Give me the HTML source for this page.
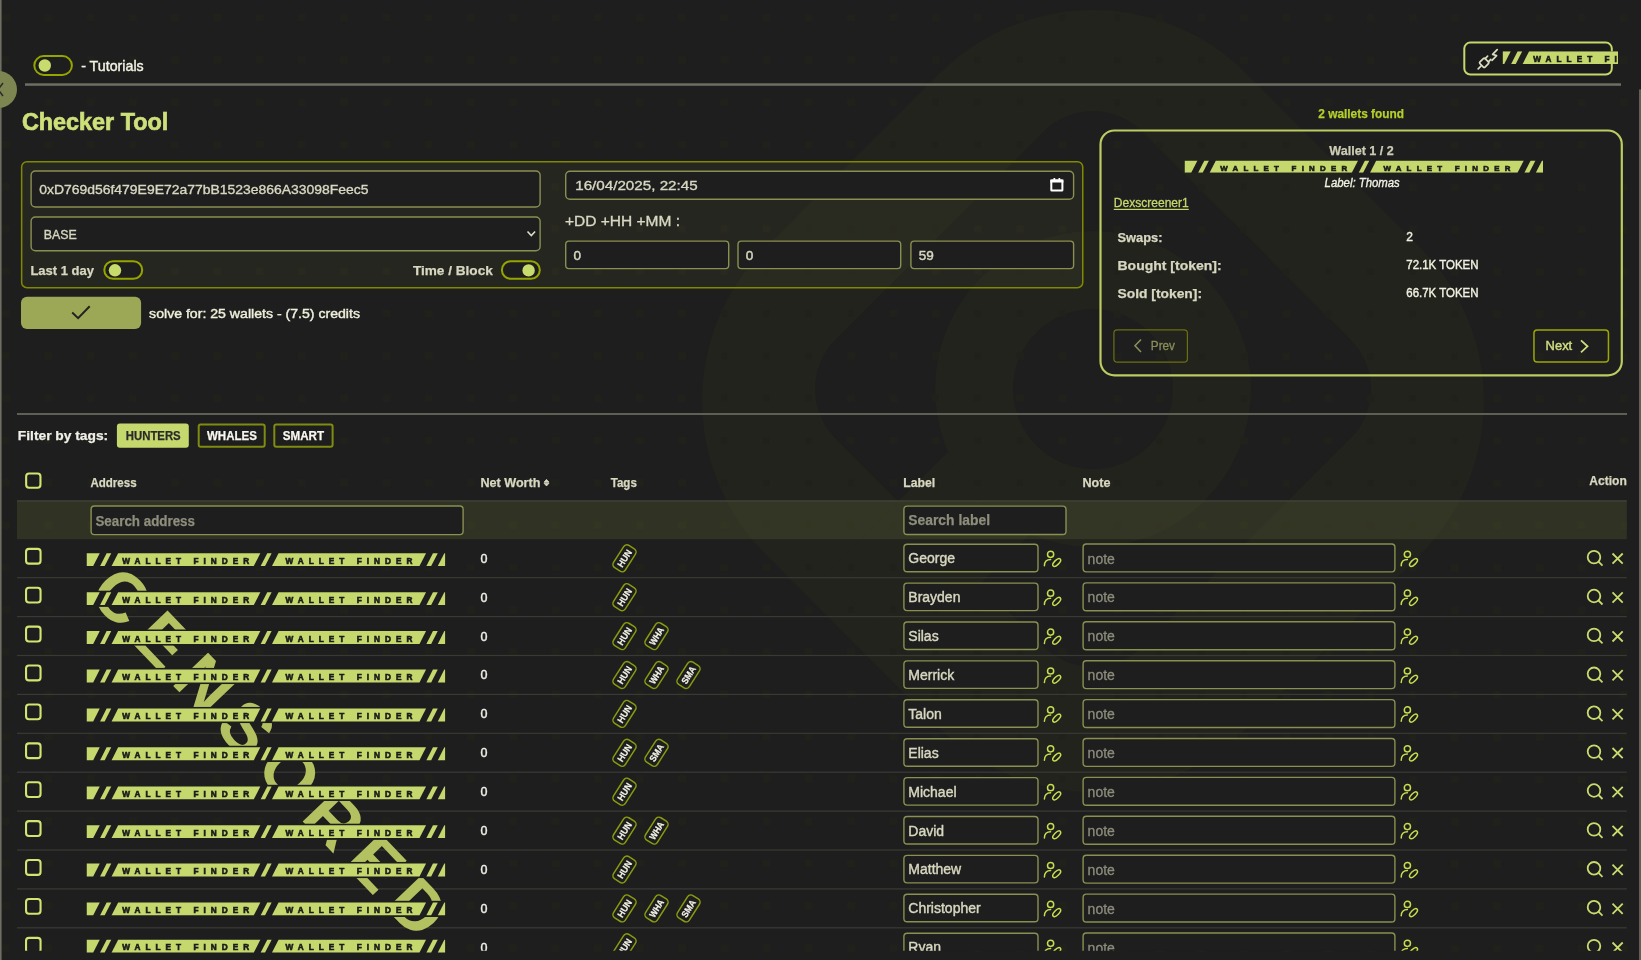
<!DOCTYPE html>
<html><head><meta charset="utf-8"><title>Checker Tool</title>
<style>html,body{margin:0;padding:0;width:1641px;height:960px;overflow:hidden;background:#1e1e1e;font-family:"Liberation Sans", sans-serif;}</style>
</head><body>
<svg width="1641" height="960" viewBox="0 0 1641 960" style="position:absolute;left:0;top:0;font-family:'Liberation Sans', sans-serif;will-change:transform">
<defs><pattern id="dots" x="2.5" y="14" width="42.25" height="42.3" patternUnits="userSpaceOnUse"><rect x="0" y="0" width="7" height="7" fill="#21211b"/></pattern><pattern id="dots2" x="1198.2" y="14.5" width="42.2" height="42.3" patternUnits="userSpaceOnUse"><rect x="0" y="0" width="7" height="7" fill="#21211b"/></pattern></defs>
<rect x="0" y="0" width="1641" height="960" fill="#1e1e1e"/>
<g>
<rect x="-340" y="-340" width="680" height="680" rx="217" fill="#22231d" transform="translate(1093,401) rotate(45)"/>
<rect x="-217" y="-217" width="434" height="434" rx="70" fill="#1e1e1e" transform="translate(1093,389) rotate(45)"/>
<rect x="0" y="-58" width="320" height="116" fill="#22231d" transform="translate(1093,389) rotate(135)"/>
<circle cx="1093" cy="389" r="158" fill="#22231d"/>
<circle cx="1093" cy="389" r="80" fill="#1e1e1e"/>
</g>
<rect x="0" y="0" width="1093" height="960" fill="url(#dots)"/>
<rect x="1093" y="0" width="548" height="960" fill="url(#dots2)"/>
<rect x="0.00" y="0.00" width="1.60" height="960.00" rx="0.00" fill="#6e6e62"/>
<rect x="1639.00" y="89.40" width="2.00" height="870.60" rx="0.00" fill="#5f5f55"/>
<circle cx="-1.5" cy="89.5" r="18.5" fill="#7d8650"/>
<polyline points="3,83 -2,89.5 3,96" fill="none" stroke="#2a2a2a" stroke-width="1.5"/>
<rect x="34.30" y="56.10" width="37.60" height="18.80" rx="9.40" fill="#1e1e1e" stroke="#96a400" stroke-width="2"/>
<circle cx="44.80" cy="65.50" r="6.2" fill="#c8dc6e"/>
<text x="81.20" y="70.70" font-size="14.5" fill="#f2f2e2" font-weight="normal" textLength="62.50" lengthAdjust="spacingAndGlyphs" stroke="#f2f2e2" stroke-width="0.4" text-anchor="start">- Tutorials</text>
<rect x="25.00" y="83.30" width="1596.00" height="2.50" rx="0.00" fill="#6e6e62"/>
<rect x="1464.30" y="42.60" width="147.50" height="31.90" rx="6.00" fill="#1b1b1b" stroke="#c5d86d" stroke-width="2"/>
<clipPath id="tc21"><rect x="1502.80" y="51.20" width="115.20" height="12.80"/></clipPath>
<g clip-path="url(#tc21)">
<rect x="1502.80" y="51.20" width="115.20" height="12.80" fill="#1e1e1e"/>
<polygon points="1477.80,64.00 1504.25,64.00 1510.75,51.20 1484.30,51.20" fill="#c5d86d"/>
<polygon points="1511.15,64.00 1515.75,64.00 1522.25,51.20 1517.65,51.20" fill="#c5d86d"/>
<polygon points="1522.65,64.00 1664.85,64.00 1671.35,51.20 1529.15,51.20" fill="#c5d86d"/>
<polygon points="1671.75,64.00 1676.15,64.00 1682.65,51.20 1678.25,51.20" fill="#c5d86d"/>
<polygon points="1683.05,64.00 1830.55,64.00 1837.05,51.20 1689.55,51.20" fill="#c5d86d"/>
<polygon points="1837.45,64.00 1842.25,64.00 1848.75,51.20 1843.95,51.20" fill="#c5d86d"/>
<polygon points="1848.85,64.00 1997.80,64.00 2004.30,51.20 1855.35,51.20" fill="#c5d86d"/>
<text x="1533.25" y="61.67" font-size="8.15" font-weight="bold" fill="#1a1a1a" stroke="#1a1a1a" stroke-width="0.6" textLength="127.00" lengthAdjust="spacing">WALLET FINDER</text>
<text x="1696.45" y="61.67" font-size="8.15" font-weight="bold" fill="#1a1a1a" stroke="#1a1a1a" stroke-width="0.6" textLength="127.00" lengthAdjust="spacing">WALLET FINDER</text>
</g>
<g fill="none" stroke="#dcdcc0" stroke-width="1.7" stroke-linecap="round" stroke-linejoin="round"><line x1="1478.2" y1="68.8" x2="1481" y2="66"/><g transform="translate(1484.2,62.8) rotate(-45)"><rect x="-3.6" y="-3.6" width="7.2" height="7.2" rx="1.2"/></g><line x1="1485.2" y1="58.6" x2="1487.6" y2="56.2"/><line x1="1488.4" y1="61.8" x2="1490.8" y2="59.4"/><polyline points="1497.2,49.6 1492.6,54.4 1496.6,55.6 1492,60.4"/></g>
<text x="21.90" y="129.60" font-size="24.5" fill="#cde07a" font-weight="bold" textLength="146.40" lengthAdjust="spacingAndGlyphs" stroke="#cde07a" stroke-width="0.7" text-anchor="start">Checker Tool</text>
<rect x="21.65" y="161.75" width="1061.10" height="125.90" rx="5.25" fill="rgba(80,80,50,0.18)" stroke="#7f8a00" stroke-width="1.5"/>
<rect x="31.10" y="171.00" width="509.00" height="36.00" rx="4.30" fill="#1e1e1e" stroke="#8a9050" stroke-width="1.4"/>
<text x="39.20" y="193.70" font-size="13" fill="#d8d8c2" font-weight="normal" textLength="329.40" lengthAdjust="spacingAndGlyphs" stroke="#d8d8c2" stroke-width="0.35" text-anchor="start">0xD769d56f479E9E72a77bB1523e866A33098Feec5</text>
<rect x="31.10" y="217.00" width="509.00" height="33.80" rx="4.30" fill="#1e1e1e" stroke="#8a9050" stroke-width="1.4"/>
<text x="43.80" y="239.00" font-size="13" fill="#d8d8c2" font-weight="normal" textLength="33.00" lengthAdjust="spacingAndGlyphs" stroke="#d8d8c2" stroke-width="0.35" text-anchor="start">BASE</text>
<polyline points="527.5,231.5 531.3,235.5 535.1,231.5" fill="none" stroke="#ddddc8" stroke-width="1.6"/>
<text x="30.40" y="274.70" font-size="13" fill="#d8d8c0" font-weight="bold" textLength="63.50" lengthAdjust="spacingAndGlyphs" stroke="#d8d8c0" stroke-width="0.25" text-anchor="start">Last 1 day</text>
<rect x="104.30" y="261.20" width="37.90" height="17.60" rx="8.80" fill="#1e1e1e" stroke="#96a400" stroke-width="2"/>
<circle cx="115.00" cy="270.30" r="6.2" fill="#c8dc6e"/>
<text x="412.90" y="275.10" font-size="13" fill="#d8d8c0" font-weight="bold" textLength="79.90" lengthAdjust="spacingAndGlyphs" stroke="#d8d8c0" stroke-width="0.25" text-anchor="start">Time / Block</text>
<rect x="501.90" y="261.20" width="37.90" height="17.60" rx="8.80" fill="#1e1e1e" stroke="#96a400" stroke-width="2"/>
<circle cx="528.60" cy="270.40" r="6.2" fill="#c8dc6e"/>
<rect x="565.70" y="171.20" width="507.90" height="28.10" rx="4.30" fill="#1e1e1e" stroke="#8a9050" stroke-width="1.4"/>
<text x="575.20" y="190.10" font-size="13.5" fill="#d8d8c2" font-weight="normal" textLength="122.50" lengthAdjust="spacingAndGlyphs" stroke="#d8d8c2" stroke-width="0.35" text-anchor="start">16/04/2025, 22:45</text>
<rect x="1051.30" y="180.50" width="11.10" height="9.90" rx="0.50" fill="none" stroke="#ffffff" stroke-width="2"/>
<rect x="1050.30" y="179.50" width="13.10" height="3.00" rx="0.00" fill="#ffffff"/>
<rect x="1053.50" y="178.00" width="1.70" height="2.50" rx="0.00" fill="#ffffff"/>
<rect x="1058.50" y="178.00" width="1.70" height="2.50" rx="0.00" fill="#ffffff"/>
<text x="564.90" y="226.10" font-size="15" fill="#d8d8c2" font-weight="normal" textLength="115.10" lengthAdjust="spacingAndGlyphs" stroke="#d8d8c2" stroke-width="0.35" text-anchor="start">+DD +HH +MM :</text>
<rect x="565.70" y="241.10" width="163.00" height="27.50" rx="3.30" fill="#1e1e1e" stroke="#8a9050" stroke-width="1.4"/>
<text x="573.50" y="260.40" font-size="13.5" fill="#d8d8c2" font-weight="normal" stroke="#d8d8c2" stroke-width="0.45" text-anchor="start">0</text>
<rect x="738.00" y="241.10" width="162.70" height="27.50" rx="3.30" fill="#1e1e1e" stroke="#8a9050" stroke-width="1.4"/>
<text x="745.80" y="260.40" font-size="13.5" fill="#d8d8c2" font-weight="normal" stroke="#d8d8c2" stroke-width="0.45" text-anchor="start">0</text>
<rect x="910.90" y="241.10" width="162.70" height="27.50" rx="3.30" fill="#1e1e1e" stroke="#8a9050" stroke-width="1.4"/>
<text x="918.70" y="260.40" font-size="13.5" fill="#d8d8c2" font-weight="normal" stroke="#d8d8c2" stroke-width="0.45" text-anchor="start">59</text>
<rect x="21.00" y="296.80" width="120.10" height="32.30" rx="6.00" fill="#9ca856"/>
<polyline points="72.2,312.6 78.1,318.2 89.7,306.2" fill="none" stroke="#222222" stroke-width="2"/>
<text x="149.10" y="317.70" font-size="13" fill="#f0f0dc" font-weight="normal" textLength="210.90" lengthAdjust="spacingAndGlyphs" stroke="#f0f0dc" stroke-width="0.4" text-anchor="start">solve for: 25 wallets - (7.5) credits</text>
<text x="1318.30" y="117.80" font-size="13" fill="#b5cf2a" font-weight="bold" textLength="85.70" lengthAdjust="spacingAndGlyphs" stroke="#b5cf2a" stroke-width="0.25" text-anchor="start">2 wallets found</text>
<rect x="1100.50" y="130.50" width="521.30" height="244.80" rx="13.90" fill="none" stroke="#bccb62" stroke-width="2.2"/>
<text x="1329.30" y="155.40" font-size="13" fill="#cdcdb5" font-weight="bold" textLength="64.50" lengthAdjust="spacingAndGlyphs" stroke="#cdcdb5" stroke-width="0.25" text-anchor="start">Wallet 1 / 2</text>
<clipPath id="tc67"><rect x="1184.75" y="160.40" width="358.25" height="12.40"/></clipPath>
<g clip-path="url(#tc67)">
<rect x="1184.75" y="160.40" width="358.25" height="12.40" fill="#1e1e1e"/>
<polygon points="1164.75,172.80 1191.20,172.80 1197.49,160.40 1171.04,160.40" fill="#c5d86d"/>
<polygon points="1198.10,172.80 1202.70,172.80 1208.99,160.40 1204.39,160.40" fill="#c5d86d"/>
<polygon points="1209.60,172.80 1351.80,172.80 1358.09,160.40 1215.89,160.40" fill="#c5d86d"/>
<polygon points="1358.70,172.80 1363.10,172.80 1369.39,160.40 1364.99,160.40" fill="#c5d86d"/>
<polygon points="1370.00,172.80 1517.50,172.80 1523.79,160.40 1376.29,160.40" fill="#c5d86d"/>
<polygon points="1524.40,172.80 1529.20,172.80 1535.49,160.40 1530.69,160.40" fill="#c5d86d"/>
<polygon points="1535.80,172.80 1684.75,172.80 1691.04,160.40 1542.09,160.40" fill="#c5d86d"/>
<text x="1220.20" y="170.55" font-size="7.89" font-weight="bold" fill="#1a1a1a" stroke="#1a1a1a" stroke-width="0.6" textLength="127.00" lengthAdjust="spacing">WALLET FINDER</text>
<text x="1383.40" y="170.55" font-size="7.89" font-weight="bold" fill="#1a1a1a" stroke="#1a1a1a" stroke-width="0.6" textLength="127.00" lengthAdjust="spacing">WALLET FINDER</text>
</g>
<text x="1324.60" y="187.00" font-size="12.5" fill="#f2f2e4" font-weight="normal" font-style="italic" textLength="75.20" lengthAdjust="spacingAndGlyphs" stroke="#f2f2e4" stroke-width="0.35" text-anchor="start">Label: Thomas</text>
<text x="1113.75" y="206.90" font-size="12.5" fill="#c5d86d" font-weight="normal" textLength="75.00" lengthAdjust="spacingAndGlyphs" stroke="#c5d86d" stroke-width="0.3" text-anchor="start">Dexscreener1</text>
<rect x="1113.75" y="208.80" width="75.00" height="1.20" rx="0.00" fill="#c5d86d"/>
<text x="1117.50" y="241.70" font-size="13" fill="#d8d8c0" font-weight="bold" textLength="45.00" lengthAdjust="spacingAndGlyphs" stroke="#d8d8c0" stroke-width="0.25" text-anchor="start">Swaps:</text>
<text x="1406.30" y="241.20" font-size="12" fill="#f0f0e0" font-weight="normal" stroke="#f0f0e0" stroke-width="0.4" text-anchor="start">2</text>
<text x="1117.50" y="269.70" font-size="13" fill="#d8d8c0" font-weight="bold" textLength="104.20" lengthAdjust="spacingAndGlyphs" stroke="#d8d8c0" stroke-width="0.25" text-anchor="start">Bought [token]:</text>
<text x="1406.30" y="269.20" font-size="12" fill="#f0f0e0" font-weight="normal" textLength="72.20" lengthAdjust="spacingAndGlyphs" stroke="#f0f0e0" stroke-width="0.4" text-anchor="start">72.1K TOKEN</text>
<text x="1117.50" y="297.70" font-size="13" fill="#d8d8c0" font-weight="bold" textLength="84.50" lengthAdjust="spacingAndGlyphs" stroke="#d8d8c0" stroke-width="0.25" text-anchor="start">Sold [token]:</text>
<text x="1406.30" y="297.20" font-size="12" fill="#f0f0e0" font-weight="normal" textLength="72.20" lengthAdjust="spacingAndGlyphs" stroke="#f0f0e0" stroke-width="0.4" text-anchor="start">66.7K TOKEN</text>
<rect x="1113.90" y="329.80" width="73.50" height="32.40" rx="3.40" fill="none" stroke="#6b7010" stroke-width="1.2"/>
<polyline points="1141,339.5 1135,345.8 1141,352" fill="none" stroke="#8a8e5a" stroke-width="1.6"/>
<text x="1150.80" y="349.70" font-size="13" fill="#8a8e5a" font-weight="normal" textLength="24.20" lengthAdjust="spacingAndGlyphs" stroke="#8a8e5a" stroke-width="0.3" text-anchor="start">Prev</text>
<rect x="1533.95" y="329.95" width="74.50" height="32.00" rx="3.25" fill="none" stroke="#9aa800" stroke-width="1.5"/>
<text x="1545.60" y="349.80" font-size="13" fill="#d0dc80" font-weight="normal" textLength="26.60" lengthAdjust="spacingAndGlyphs" stroke="#d0dc80" stroke-width="0.45" text-anchor="start">Next</text>
<polyline points="1581,340.3 1587.5,346.3 1581,352.4" fill="none" stroke="#d0dc80" stroke-width="1.8"/>
<rect x="17.00" y="413.00" width="1610.00" height="2.00" rx="0.00" fill="#5f5f55"/>
<text x="17.80" y="440.40" font-size="13" fill="#f0f0e8" font-weight="bold" textLength="90.40" lengthAdjust="spacingAndGlyphs" stroke="#f0f0e8" stroke-width="0.25" text-anchor="start">Filter by tags:</text>
<rect x="116.90" y="423.40" width="71.90" height="24.30" rx="3.00" fill="#c5d86d"/>
<text x="125.80" y="440.20" font-size="12" fill="#2a2a2a" font-weight="bold" textLength="54.90" lengthAdjust="spacingAndGlyphs" stroke="#2a2a2a" stroke-width="0.25" text-anchor="start">HUNTERS</text>
<rect x="198.70" y="424.40" width="66.00" height="22.30" rx="2.00" fill="#1e1e1e" stroke="#7f8c0f" stroke-width="2"/>
<text x="207.00" y="440.20" font-size="12" fill="#f8f8f0" font-weight="bold" textLength="49.80" lengthAdjust="spacingAndGlyphs" stroke="#f8f8f0" stroke-width="0.25" text-anchor="start">WHALES</text>
<rect x="274.30" y="424.40" width="58.30" height="22.30" rx="2.00" fill="#1e1e1e" stroke="#7f8c0f" stroke-width="2"/>
<text x="282.70" y="440.20" font-size="12" fill="#f8f8f0" font-weight="bold" textLength="41.40" lengthAdjust="spacingAndGlyphs" stroke="#f8f8f0" stroke-width="0.25" text-anchor="start">SMART</text>
<rect x="26.15" y="473.55" width="14.30" height="14.20" rx="2.95" fill="none" stroke="#d2e570" stroke-width="2.1"/>
<text x="90.40" y="486.60" font-size="12" fill="#d8d8c0" font-weight="bold" textLength="46.20" lengthAdjust="spacingAndGlyphs" stroke="#d8d8c0" stroke-width="0.25" text-anchor="start">Address</text>
<text x="480.40" y="486.60" font-size="12" fill="#d8d8c0" font-weight="bold" textLength="60.00" lengthAdjust="spacingAndGlyphs" stroke="#d8d8c0" stroke-width="0.25" text-anchor="start">Net Worth</text>
<text x="610.80" y="486.60" font-size="12" fill="#d8d8c0" font-weight="bold" textLength="26.00" lengthAdjust="spacingAndGlyphs" stroke="#d8d8c0" stroke-width="0.25" text-anchor="start">Tags</text>
<text x="903.20" y="486.60" font-size="12" fill="#d8d8c0" font-weight="bold" textLength="32.00" lengthAdjust="spacingAndGlyphs" stroke="#d8d8c0" stroke-width="0.25" text-anchor="start">Label</text>
<text x="1082.40" y="486.60" font-size="12" fill="#d8d8c0" font-weight="bold" textLength="28.00" lengthAdjust="spacingAndGlyphs" stroke="#d8d8c0" stroke-width="0.25" text-anchor="start">Note</text>
<path d="M544,482.2 L546.5,479.4 L549,482.2 Z M544,483.2 L546.5,486 L549,483.2 Z" fill="#d8d8c0" stroke="#d8d8c0" stroke-width="0.8" stroke-linejoin="round"/>
<text x="1589.30" y="484.80" font-size="12" fill="#d8d8c0" font-weight="bold" textLength="37.50" lengthAdjust="spacingAndGlyphs" stroke="#d8d8c0" stroke-width="0.25" text-anchor="start">Action</text>
<rect x="17.00" y="500.40" width="1609.80" height="38.80" rx="0.00" fill="rgba(110,115,60,0.24)"/>
<rect x="17.00" y="500.40" width="1609.80" height="1.20" rx="0.00" fill="#45453a"/>
<rect x="91.10" y="506.00" width="372.00" height="28.60" rx="3.30" fill="#1e1e1e" stroke="#8a9050" stroke-width="1.4"/>
<text x="95.40" y="525.50" font-size="14" fill="#8e8e7c" font-weight="bold" textLength="99.60" lengthAdjust="spacingAndGlyphs" stroke="#8e8e7c" stroke-width="0.25" text-anchor="start">Search address</text>
<rect x="903.90" y="506.10" width="162.10" height="28.40" rx="3.30" fill="#1e1e1e" stroke="#8a9050" stroke-width="1.4"/>
<text x="908.30" y="524.90" font-size="14" fill="#8e8e7c" font-weight="bold" textLength="81.70" lengthAdjust="spacingAndGlyphs" stroke="#8e8e7c" stroke-width="0.25" text-anchor="start">Search label</text>
<clipPath id="tbl"><rect x="0" y="538" width="1641" height="412.8"/></clipPath>
<g clip-path="url(#tbl)">
<rect x="17.00" y="577.10" width="1609.80" height="1.20" rx="0.00" fill="#3a3a35"/>
<rect x="17.00" y="616.00" width="1609.80" height="1.20" rx="0.00" fill="#3a3a35"/>
<rect x="17.00" y="654.90" width="1609.80" height="1.20" rx="0.00" fill="#3a3a35"/>
<rect x="17.00" y="693.80" width="1609.80" height="1.20" rx="0.00" fill="#3a3a35"/>
<rect x="17.00" y="732.70" width="1609.80" height="1.20" rx="0.00" fill="#3a3a35"/>
<rect x="17.00" y="771.60" width="1609.80" height="1.20" rx="0.00" fill="#3a3a35"/>
<rect x="17.00" y="810.50" width="1609.80" height="1.20" rx="0.00" fill="#3a3a35"/>
<rect x="17.00" y="849.40" width="1609.80" height="1.20" rx="0.00" fill="#3a3a35"/>
<rect x="17.00" y="888.30" width="1609.80" height="1.20" rx="0.00" fill="#3a3a35"/>
<rect x="17.00" y="927.20" width="1609.80" height="1.20" rx="0.00" fill="#3a3a35"/>
<rect x="17.00" y="966.10" width="1609.80" height="1.20" rx="0.00" fill="#3a3a35"/>
<g opacity="1"><text x="0" y="0" font-size="70" font-weight="bold" fill="#b4c160" transform="translate(269.5,752) rotate(46.3)" text-anchor="middle" dominant-baseline="central" textLength="480" lengthAdjust="spacing">CENSORED</text></g>
<rect x="26.05" y="548.85" width="14.50" height="14.80" rx="2.95" fill="none" stroke="#d2e570" stroke-width="2.1"/>
<clipPath id="tc132"><rect x="86.75" y="551.40" width="358.35" height="16.50"/></clipPath>
<g clip-path="url(#tc132)">
<rect x="86.75" y="551.40" width="358.35" height="16.50" fill="#1e1e1e"/>
<polygon points="66.75,566.10 93.20,566.10 99.75,553.20 73.30,553.20" fill="#c5d86d"/>
<polygon points="100.10,566.10 104.70,566.10 111.25,553.20 106.65,553.20" fill="#c5d86d"/>
<polygon points="111.60,566.10 253.80,566.10 260.35,553.20 118.15,553.20" fill="#c5d86d"/>
<polygon points="260.70,566.10 265.10,566.10 271.65,553.20 267.25,553.20" fill="#c5d86d"/>
<polygon points="272.00,566.10 419.50,566.10 426.05,553.20 278.55,553.20" fill="#c5d86d"/>
<polygon points="426.40,566.10 431.20,566.10 437.75,553.20 432.95,553.20" fill="#c5d86d"/>
<polygon points="437.80,566.10 586.75,566.10 593.30,553.20 444.35,553.20" fill="#c5d86d"/>
<text x="122.20" y="563.75" font-size="8.21" font-weight="bold" fill="#1a1a1a" stroke="#1a1a1a" stroke-width="0.6" textLength="127.00" lengthAdjust="spacing">WALLET FINDER</text>
<text x="285.40" y="563.75" font-size="8.21" font-weight="bold" fill="#1a1a1a" stroke="#1a1a1a" stroke-width="0.6" textLength="127.00" lengthAdjust="spacing">WALLET FINDER</text>
</g>
<text x="480.40" y="562.70" font-size="12.5" fill="#f0f0e8" font-weight="normal" stroke="#f0f0e8" stroke-width="0.4" text-anchor="start">0</text>
<g transform="translate(624.50,558.30) rotate(-57.5)"><rect x="-13.2" y="-7" width="26.4" height="14" rx="3.8" fill="#1e1e1e" stroke="#8a9a10" stroke-width="1.5"/><text x="0" y="3.3" font-size="9.2" font-weight="bold" fill="#f4f4e8" stroke="#f4f4e8" stroke-width="0.2" text-anchor="middle" textLength="19" lengthAdjust="spacingAndGlyphs">HUN</text></g>
<rect x="903.90" y="544.20" width="134.10" height="27.50" rx="3.30" fill="#1e1e1e" stroke="#8a9050" stroke-width="1.4"/>
<text x="908.30" y="563.25" font-size="14" fill="#d8d8c0" font-weight="normal" stroke="#d8d8c0" stroke-width="0.4" text-anchor="start">George</text>
<g transform="translate(1043.80,549.90)" fill="none" stroke="#c8dc50" stroke-width="1.5" stroke-linecap="round"><circle cx="6.8" cy="4.4" r="3.1"/><path d="M0.6,15.8 C0.6,11.8 2.8,9.5 6.8,9.5"/><ellipse cx="12.9" cy="12.6" rx="5.0" ry="2.3" transform="rotate(-45 12.9 12.6)"/></g>
<g transform="translate(1400.60,549.90)" fill="none" stroke="#c8dc50" stroke-width="1.5" stroke-linecap="round"><circle cx="6.8" cy="4.4" r="3.1"/><path d="M0.6,15.8 C0.6,11.8 2.8,9.5 6.8,9.5"/><ellipse cx="12.9" cy="12.6" rx="5.0" ry="2.3" transform="rotate(-45 12.9 12.6)"/></g>
<rect x="1083.10" y="544.00" width="311.80" height="27.90" rx="3.30" fill="#1e1e1e" stroke="#8a9050" stroke-width="1.4"/>
<text x="1087.60" y="563.50" font-size="14" fill="#8c8c7c" font-weight="normal" stroke="#8c8c7c" stroke-width="0.3" text-anchor="start">note</text>
<g fill="none" stroke="#c8dc6e" stroke-width="1.8"><circle cx="1594" cy="557.10" r="6.3"/><line x1="1598.5" y1="561.60" x2="1602.5" y2="565.60"/><path d="M1612.5,553.50 L1622.7,563.70 M1622.7,553.50 L1612.5,563.70"/></g>
<rect x="26.05" y="587.75" width="14.50" height="14.80" rx="2.95" fill="none" stroke="#d2e570" stroke-width="2.1"/>
<clipPath id="tc155"><rect x="86.75" y="590.40" width="358.35" height="16.50"/></clipPath>
<g clip-path="url(#tc155)">
<rect x="86.75" y="590.40" width="358.35" height="16.50" fill="#1e1e1e"/>
<polygon points="66.75,605.10 93.20,605.10 99.75,592.20 73.30,592.20" fill="#c5d86d"/>
<polygon points="100.10,605.10 104.70,605.10 111.25,592.20 106.65,592.20" fill="#c5d86d"/>
<polygon points="111.60,605.10 253.80,605.10 260.35,592.20 118.15,592.20" fill="#c5d86d"/>
<polygon points="260.70,605.10 265.10,605.10 271.65,592.20 267.25,592.20" fill="#c5d86d"/>
<polygon points="272.00,605.10 419.50,605.10 426.05,592.20 278.55,592.20" fill="#c5d86d"/>
<polygon points="426.40,605.10 431.20,605.10 437.75,592.20 432.95,592.20" fill="#c5d86d"/>
<polygon points="437.80,605.10 586.75,605.10 593.30,592.20 444.35,592.20" fill="#c5d86d"/>
<text x="122.20" y="602.75" font-size="8.21" font-weight="bold" fill="#1a1a1a" stroke="#1a1a1a" stroke-width="0.6" textLength="127.00" lengthAdjust="spacing">WALLET FINDER</text>
<text x="285.40" y="602.75" font-size="8.21" font-weight="bold" fill="#1a1a1a" stroke="#1a1a1a" stroke-width="0.6" textLength="127.00" lengthAdjust="spacing">WALLET FINDER</text>
</g>
<text x="480.40" y="601.60" font-size="12.5" fill="#f0f0e8" font-weight="normal" stroke="#f0f0e8" stroke-width="0.4" text-anchor="start">0</text>
<g transform="translate(624.50,597.20) rotate(-57.5)"><rect x="-13.2" y="-7" width="26.4" height="14" rx="3.8" fill="#1e1e1e" stroke="#8a9a10" stroke-width="1.5"/><text x="0" y="3.3" font-size="9.2" font-weight="bold" fill="#f4f4e8" stroke="#f4f4e8" stroke-width="0.2" text-anchor="middle" textLength="19" lengthAdjust="spacingAndGlyphs">HUN</text></g>
<rect x="903.90" y="583.10" width="134.10" height="27.50" rx="3.30" fill="#1e1e1e" stroke="#8a9050" stroke-width="1.4"/>
<text x="908.30" y="602.15" font-size="14" fill="#d8d8c0" font-weight="normal" stroke="#d8d8c0" stroke-width="0.4" text-anchor="start">Brayden</text>
<g transform="translate(1043.80,588.80)" fill="none" stroke="#c8dc50" stroke-width="1.5" stroke-linecap="round"><circle cx="6.8" cy="4.4" r="3.1"/><path d="M0.6,15.8 C0.6,11.8 2.8,9.5 6.8,9.5"/><ellipse cx="12.9" cy="12.6" rx="5.0" ry="2.3" transform="rotate(-45 12.9 12.6)"/></g>
<g transform="translate(1400.60,588.80)" fill="none" stroke="#c8dc50" stroke-width="1.5" stroke-linecap="round"><circle cx="6.8" cy="4.4" r="3.1"/><path d="M0.6,15.8 C0.6,11.8 2.8,9.5 6.8,9.5"/><ellipse cx="12.9" cy="12.6" rx="5.0" ry="2.3" transform="rotate(-45 12.9 12.6)"/></g>
<rect x="1083.10" y="582.90" width="311.80" height="27.90" rx="3.30" fill="#1e1e1e" stroke="#8a9050" stroke-width="1.4"/>
<text x="1087.60" y="602.40" font-size="14" fill="#8c8c7c" font-weight="normal" stroke="#8c8c7c" stroke-width="0.3" text-anchor="start">note</text>
<g fill="none" stroke="#c8dc6e" stroke-width="1.8"><circle cx="1594" cy="596.00" r="6.3"/><line x1="1598.5" y1="600.50" x2="1602.5" y2="604.50"/><path d="M1612.5,592.40 L1622.7,602.60 M1622.7,592.40 L1612.5,602.60"/></g>
<rect x="26.05" y="626.65" width="14.50" height="14.80" rx="2.95" fill="none" stroke="#d2e570" stroke-width="2.1"/>
<clipPath id="tc178"><rect x="86.75" y="629.30" width="358.35" height="16.50"/></clipPath>
<g clip-path="url(#tc178)">
<rect x="86.75" y="629.30" width="358.35" height="16.50" fill="#1e1e1e"/>
<polygon points="66.75,644.00 93.20,644.00 99.75,631.10 73.30,631.10" fill="#c5d86d"/>
<polygon points="100.10,644.00 104.70,644.00 111.25,631.10 106.65,631.10" fill="#c5d86d"/>
<polygon points="111.60,644.00 253.80,644.00 260.35,631.10 118.15,631.10" fill="#c5d86d"/>
<polygon points="260.70,644.00 265.10,644.00 271.65,631.10 267.25,631.10" fill="#c5d86d"/>
<polygon points="272.00,644.00 419.50,644.00 426.05,631.10 278.55,631.10" fill="#c5d86d"/>
<polygon points="426.40,644.00 431.20,644.00 437.75,631.10 432.95,631.10" fill="#c5d86d"/>
<polygon points="437.80,644.00 586.75,644.00 593.30,631.10 444.35,631.10" fill="#c5d86d"/>
<text x="122.20" y="641.65" font-size="8.21" font-weight="bold" fill="#1a1a1a" stroke="#1a1a1a" stroke-width="0.6" textLength="127.00" lengthAdjust="spacing">WALLET FINDER</text>
<text x="285.40" y="641.65" font-size="8.21" font-weight="bold" fill="#1a1a1a" stroke="#1a1a1a" stroke-width="0.6" textLength="127.00" lengthAdjust="spacing">WALLET FINDER</text>
</g>
<text x="480.40" y="640.50" font-size="12.5" fill="#f0f0e8" font-weight="normal" stroke="#f0f0e8" stroke-width="0.4" text-anchor="start">0</text>
<g transform="translate(624.50,636.10) rotate(-57.5)"><rect x="-13.2" y="-7" width="26.4" height="14" rx="3.8" fill="#1e1e1e" stroke="#8a9a10" stroke-width="1.5"/><text x="0" y="3.3" font-size="9.2" font-weight="bold" fill="#f4f4e8" stroke="#f4f4e8" stroke-width="0.2" text-anchor="middle" textLength="19" lengthAdjust="spacingAndGlyphs">HUN</text></g>
<g transform="translate(656.50,636.10) rotate(-57.5)"><rect x="-13.2" y="-7" width="26.4" height="14" rx="3.8" fill="#1e1e1e" stroke="#8a9a10" stroke-width="1.5"/><text x="0" y="3.3" font-size="9.2" font-weight="bold" fill="#f4f4e8" stroke="#f4f4e8" stroke-width="0.2" text-anchor="middle" textLength="19" lengthAdjust="spacingAndGlyphs">WHA</text></g>
<rect x="903.90" y="622.00" width="134.10" height="27.50" rx="3.30" fill="#1e1e1e" stroke="#8a9050" stroke-width="1.4"/>
<text x="908.30" y="641.05" font-size="14" fill="#d8d8c0" font-weight="normal" stroke="#d8d8c0" stroke-width="0.4" text-anchor="start">Silas</text>
<g transform="translate(1043.80,627.70)" fill="none" stroke="#c8dc50" stroke-width="1.5" stroke-linecap="round"><circle cx="6.8" cy="4.4" r="3.1"/><path d="M0.6,15.8 C0.6,11.8 2.8,9.5 6.8,9.5"/><ellipse cx="12.9" cy="12.6" rx="5.0" ry="2.3" transform="rotate(-45 12.9 12.6)"/></g>
<g transform="translate(1400.60,627.70)" fill="none" stroke="#c8dc50" stroke-width="1.5" stroke-linecap="round"><circle cx="6.8" cy="4.4" r="3.1"/><path d="M0.6,15.8 C0.6,11.8 2.8,9.5 6.8,9.5"/><ellipse cx="12.9" cy="12.6" rx="5.0" ry="2.3" transform="rotate(-45 12.9 12.6)"/></g>
<rect x="1083.10" y="621.80" width="311.80" height="27.90" rx="3.30" fill="#1e1e1e" stroke="#8a9050" stroke-width="1.4"/>
<text x="1087.60" y="641.30" font-size="14" fill="#8c8c7c" font-weight="normal" stroke="#8c8c7c" stroke-width="0.3" text-anchor="start">note</text>
<g fill="none" stroke="#c8dc6e" stroke-width="1.8"><circle cx="1594" cy="634.90" r="6.3"/><line x1="1598.5" y1="639.40" x2="1602.5" y2="643.40"/><path d="M1612.5,631.30 L1622.7,641.50 M1622.7,631.30 L1612.5,641.50"/></g>
<rect x="26.05" y="665.55" width="14.50" height="14.80" rx="2.95" fill="none" stroke="#d2e570" stroke-width="2.1"/>
<clipPath id="tc202"><rect x="86.75" y="667.70" width="358.35" height="16.50"/></clipPath>
<g clip-path="url(#tc202)">
<rect x="86.75" y="667.70" width="358.35" height="16.50" fill="#1e1e1e"/>
<polygon points="66.75,682.40 93.20,682.40 99.75,669.50 73.30,669.50" fill="#c5d86d"/>
<polygon points="100.10,682.40 104.70,682.40 111.25,669.50 106.65,669.50" fill="#c5d86d"/>
<polygon points="111.60,682.40 253.80,682.40 260.35,669.50 118.15,669.50" fill="#c5d86d"/>
<polygon points="260.70,682.40 265.10,682.40 271.65,669.50 267.25,669.50" fill="#c5d86d"/>
<polygon points="272.00,682.40 419.50,682.40 426.05,669.50 278.55,669.50" fill="#c5d86d"/>
<polygon points="426.40,682.40 431.20,682.40 437.75,669.50 432.95,669.50" fill="#c5d86d"/>
<polygon points="437.80,682.40 586.75,682.40 593.30,669.50 444.35,669.50" fill="#c5d86d"/>
<text x="122.20" y="680.05" font-size="8.21" font-weight="bold" fill="#1a1a1a" stroke="#1a1a1a" stroke-width="0.6" textLength="127.00" lengthAdjust="spacing">WALLET FINDER</text>
<text x="285.40" y="680.05" font-size="8.21" font-weight="bold" fill="#1a1a1a" stroke="#1a1a1a" stroke-width="0.6" textLength="127.00" lengthAdjust="spacing">WALLET FINDER</text>
</g>
<text x="480.40" y="679.40" font-size="12.5" fill="#f0f0e8" font-weight="normal" stroke="#f0f0e8" stroke-width="0.4" text-anchor="start">0</text>
<g transform="translate(624.50,675.00) rotate(-57.5)"><rect x="-13.2" y="-7" width="26.4" height="14" rx="3.8" fill="#1e1e1e" stroke="#8a9a10" stroke-width="1.5"/><text x="0" y="3.3" font-size="9.2" font-weight="bold" fill="#f4f4e8" stroke="#f4f4e8" stroke-width="0.2" text-anchor="middle" textLength="19" lengthAdjust="spacingAndGlyphs">HUN</text></g>
<g transform="translate(656.50,675.00) rotate(-57.5)"><rect x="-13.2" y="-7" width="26.4" height="14" rx="3.8" fill="#1e1e1e" stroke="#8a9a10" stroke-width="1.5"/><text x="0" y="3.3" font-size="9.2" font-weight="bold" fill="#f4f4e8" stroke="#f4f4e8" stroke-width="0.2" text-anchor="middle" textLength="19" lengthAdjust="spacingAndGlyphs">WHA</text></g>
<g transform="translate(688.50,675.00) rotate(-57.5)"><rect x="-13.2" y="-7" width="26.4" height="14" rx="3.8" fill="#1e1e1e" stroke="#8a9a10" stroke-width="1.5"/><text x="0" y="3.3" font-size="9.2" font-weight="bold" fill="#f4f4e8" stroke="#f4f4e8" stroke-width="0.2" text-anchor="middle" textLength="19" lengthAdjust="spacingAndGlyphs">SMA</text></g>
<rect x="903.90" y="660.90" width="134.10" height="27.50" rx="3.30" fill="#1e1e1e" stroke="#8a9050" stroke-width="1.4"/>
<text x="908.30" y="679.95" font-size="14" fill="#d8d8c0" font-weight="normal" stroke="#d8d8c0" stroke-width="0.4" text-anchor="start">Merrick</text>
<g transform="translate(1043.80,666.60)" fill="none" stroke="#c8dc50" stroke-width="1.5" stroke-linecap="round"><circle cx="6.8" cy="4.4" r="3.1"/><path d="M0.6,15.8 C0.6,11.8 2.8,9.5 6.8,9.5"/><ellipse cx="12.9" cy="12.6" rx="5.0" ry="2.3" transform="rotate(-45 12.9 12.6)"/></g>
<g transform="translate(1400.60,666.60)" fill="none" stroke="#c8dc50" stroke-width="1.5" stroke-linecap="round"><circle cx="6.8" cy="4.4" r="3.1"/><path d="M0.6,15.8 C0.6,11.8 2.8,9.5 6.8,9.5"/><ellipse cx="12.9" cy="12.6" rx="5.0" ry="2.3" transform="rotate(-45 12.9 12.6)"/></g>
<rect x="1083.10" y="660.70" width="311.80" height="27.90" rx="3.30" fill="#1e1e1e" stroke="#8a9050" stroke-width="1.4"/>
<text x="1087.60" y="680.20" font-size="14" fill="#8c8c7c" font-weight="normal" stroke="#8c8c7c" stroke-width="0.3" text-anchor="start">note</text>
<g fill="none" stroke="#c8dc6e" stroke-width="1.8"><circle cx="1594" cy="673.80" r="6.3"/><line x1="1598.5" y1="678.30" x2="1602.5" y2="682.30"/><path d="M1612.5,670.20 L1622.7,680.40 M1622.7,670.20 L1612.5,680.40"/></g>
<rect x="26.05" y="704.45" width="14.50" height="14.80" rx="2.95" fill="none" stroke="#d2e570" stroke-width="2.1"/>
<clipPath id="tc227"><rect x="86.75" y="706.80" width="358.35" height="16.50"/></clipPath>
<g clip-path="url(#tc227)">
<rect x="86.75" y="706.80" width="358.35" height="16.50" fill="#1e1e1e"/>
<polygon points="66.75,721.50 93.20,721.50 99.75,708.60 73.30,708.60" fill="#c5d86d"/>
<polygon points="100.10,721.50 104.70,721.50 111.25,708.60 106.65,708.60" fill="#c5d86d"/>
<polygon points="111.60,721.50 253.80,721.50 260.35,708.60 118.15,708.60" fill="#c5d86d"/>
<polygon points="260.70,721.50 265.10,721.50 271.65,708.60 267.25,708.60" fill="#c5d86d"/>
<polygon points="272.00,721.50 419.50,721.50 426.05,708.60 278.55,708.60" fill="#c5d86d"/>
<polygon points="426.40,721.50 431.20,721.50 437.75,708.60 432.95,708.60" fill="#c5d86d"/>
<polygon points="437.80,721.50 586.75,721.50 593.30,708.60 444.35,708.60" fill="#c5d86d"/>
<text x="122.20" y="719.15" font-size="8.21" font-weight="bold" fill="#1a1a1a" stroke="#1a1a1a" stroke-width="0.6" textLength="127.00" lengthAdjust="spacing">WALLET FINDER</text>
<text x="285.40" y="719.15" font-size="8.21" font-weight="bold" fill="#1a1a1a" stroke="#1a1a1a" stroke-width="0.6" textLength="127.00" lengthAdjust="spacing">WALLET FINDER</text>
</g>
<text x="480.40" y="718.30" font-size="12.5" fill="#f0f0e8" font-weight="normal" stroke="#f0f0e8" stroke-width="0.4" text-anchor="start">0</text>
<g transform="translate(624.50,713.90) rotate(-57.5)"><rect x="-13.2" y="-7" width="26.4" height="14" rx="3.8" fill="#1e1e1e" stroke="#8a9a10" stroke-width="1.5"/><text x="0" y="3.3" font-size="9.2" font-weight="bold" fill="#f4f4e8" stroke="#f4f4e8" stroke-width="0.2" text-anchor="middle" textLength="19" lengthAdjust="spacingAndGlyphs">HUN</text></g>
<rect x="903.90" y="699.80" width="134.10" height="27.50" rx="3.30" fill="#1e1e1e" stroke="#8a9050" stroke-width="1.4"/>
<text x="908.30" y="718.85" font-size="14" fill="#d8d8c0" font-weight="normal" stroke="#d8d8c0" stroke-width="0.4" text-anchor="start">Talon</text>
<g transform="translate(1043.80,705.50)" fill="none" stroke="#c8dc50" stroke-width="1.5" stroke-linecap="round"><circle cx="6.8" cy="4.4" r="3.1"/><path d="M0.6,15.8 C0.6,11.8 2.8,9.5 6.8,9.5"/><ellipse cx="12.9" cy="12.6" rx="5.0" ry="2.3" transform="rotate(-45 12.9 12.6)"/></g>
<g transform="translate(1400.60,705.50)" fill="none" stroke="#c8dc50" stroke-width="1.5" stroke-linecap="round"><circle cx="6.8" cy="4.4" r="3.1"/><path d="M0.6,15.8 C0.6,11.8 2.8,9.5 6.8,9.5"/><ellipse cx="12.9" cy="12.6" rx="5.0" ry="2.3" transform="rotate(-45 12.9 12.6)"/></g>
<rect x="1083.10" y="699.60" width="311.80" height="27.90" rx="3.30" fill="#1e1e1e" stroke="#8a9050" stroke-width="1.4"/>
<text x="1087.60" y="719.10" font-size="14" fill="#8c8c7c" font-weight="normal" stroke="#8c8c7c" stroke-width="0.3" text-anchor="start">note</text>
<g fill="none" stroke="#c8dc6e" stroke-width="1.8"><circle cx="1594" cy="712.70" r="6.3"/><line x1="1598.5" y1="717.20" x2="1602.5" y2="721.20"/><path d="M1612.5,709.10 L1622.7,719.30 M1622.7,709.10 L1612.5,719.30"/></g>
<rect x="26.05" y="743.35" width="14.50" height="14.80" rx="2.95" fill="none" stroke="#d2e570" stroke-width="2.1"/>
<clipPath id="tc250"><rect x="86.75" y="745.50" width="358.35" height="16.50"/></clipPath>
<g clip-path="url(#tc250)">
<rect x="86.75" y="745.50" width="358.35" height="16.50" fill="#1e1e1e"/>
<polygon points="66.75,760.20 93.20,760.20 99.75,747.30 73.30,747.30" fill="#c5d86d"/>
<polygon points="100.10,760.20 104.70,760.20 111.25,747.30 106.65,747.30" fill="#c5d86d"/>
<polygon points="111.60,760.20 253.80,760.20 260.35,747.30 118.15,747.30" fill="#c5d86d"/>
<polygon points="260.70,760.20 265.10,760.20 271.65,747.30 267.25,747.30" fill="#c5d86d"/>
<polygon points="272.00,760.20 419.50,760.20 426.05,747.30 278.55,747.30" fill="#c5d86d"/>
<polygon points="426.40,760.20 431.20,760.20 437.75,747.30 432.95,747.30" fill="#c5d86d"/>
<polygon points="437.80,760.20 586.75,760.20 593.30,747.30 444.35,747.30" fill="#c5d86d"/>
<text x="122.20" y="757.85" font-size="8.21" font-weight="bold" fill="#1a1a1a" stroke="#1a1a1a" stroke-width="0.6" textLength="127.00" lengthAdjust="spacing">WALLET FINDER</text>
<text x="285.40" y="757.85" font-size="8.21" font-weight="bold" fill="#1a1a1a" stroke="#1a1a1a" stroke-width="0.6" textLength="127.00" lengthAdjust="spacing">WALLET FINDER</text>
</g>
<text x="480.40" y="757.20" font-size="12.5" fill="#f0f0e8" font-weight="normal" stroke="#f0f0e8" stroke-width="0.4" text-anchor="start">0</text>
<g transform="translate(624.50,752.80) rotate(-57.5)"><rect x="-13.2" y="-7" width="26.4" height="14" rx="3.8" fill="#1e1e1e" stroke="#8a9a10" stroke-width="1.5"/><text x="0" y="3.3" font-size="9.2" font-weight="bold" fill="#f4f4e8" stroke="#f4f4e8" stroke-width="0.2" text-anchor="middle" textLength="19" lengthAdjust="spacingAndGlyphs">HUN</text></g>
<g transform="translate(656.50,752.80) rotate(-57.5)"><rect x="-13.2" y="-7" width="26.4" height="14" rx="3.8" fill="#1e1e1e" stroke="#8a9a10" stroke-width="1.5"/><text x="0" y="3.3" font-size="9.2" font-weight="bold" fill="#f4f4e8" stroke="#f4f4e8" stroke-width="0.2" text-anchor="middle" textLength="19" lengthAdjust="spacingAndGlyphs">SMA</text></g>
<rect x="903.90" y="738.70" width="134.10" height="27.50" rx="3.30" fill="#1e1e1e" stroke="#8a9050" stroke-width="1.4"/>
<text x="908.30" y="757.75" font-size="14" fill="#d8d8c0" font-weight="normal" stroke="#d8d8c0" stroke-width="0.4" text-anchor="start">Elias</text>
<g transform="translate(1043.80,744.40)" fill="none" stroke="#c8dc50" stroke-width="1.5" stroke-linecap="round"><circle cx="6.8" cy="4.4" r="3.1"/><path d="M0.6,15.8 C0.6,11.8 2.8,9.5 6.8,9.5"/><ellipse cx="12.9" cy="12.6" rx="5.0" ry="2.3" transform="rotate(-45 12.9 12.6)"/></g>
<g transform="translate(1400.60,744.40)" fill="none" stroke="#c8dc50" stroke-width="1.5" stroke-linecap="round"><circle cx="6.8" cy="4.4" r="3.1"/><path d="M0.6,15.8 C0.6,11.8 2.8,9.5 6.8,9.5"/><ellipse cx="12.9" cy="12.6" rx="5.0" ry="2.3" transform="rotate(-45 12.9 12.6)"/></g>
<rect x="1083.10" y="738.50" width="311.80" height="27.90" rx="3.30" fill="#1e1e1e" stroke="#8a9050" stroke-width="1.4"/>
<text x="1087.60" y="758.00" font-size="14" fill="#8c8c7c" font-weight="normal" stroke="#8c8c7c" stroke-width="0.3" text-anchor="start">note</text>
<g fill="none" stroke="#c8dc6e" stroke-width="1.8"><circle cx="1594" cy="751.60" r="6.3"/><line x1="1598.5" y1="756.10" x2="1602.5" y2="760.10"/><path d="M1612.5,748.00 L1622.7,758.20 M1622.7,748.00 L1612.5,758.20"/></g>
<rect x="26.05" y="782.25" width="14.50" height="14.80" rx="2.95" fill="none" stroke="#d2e570" stroke-width="2.1"/>
<clipPath id="tc274"><rect x="86.75" y="784.60" width="358.35" height="16.50"/></clipPath>
<g clip-path="url(#tc274)">
<rect x="86.75" y="784.60" width="358.35" height="16.50" fill="#1e1e1e"/>
<polygon points="66.75,799.30 93.20,799.30 99.75,786.40 73.30,786.40" fill="#c5d86d"/>
<polygon points="100.10,799.30 104.70,799.30 111.25,786.40 106.65,786.40" fill="#c5d86d"/>
<polygon points="111.60,799.30 253.80,799.30 260.35,786.40 118.15,786.40" fill="#c5d86d"/>
<polygon points="260.70,799.30 265.10,799.30 271.65,786.40 267.25,786.40" fill="#c5d86d"/>
<polygon points="272.00,799.30 419.50,799.30 426.05,786.40 278.55,786.40" fill="#c5d86d"/>
<polygon points="426.40,799.30 431.20,799.30 437.75,786.40 432.95,786.40" fill="#c5d86d"/>
<polygon points="437.80,799.30 586.75,799.30 593.30,786.40 444.35,786.40" fill="#c5d86d"/>
<text x="122.20" y="796.95" font-size="8.21" font-weight="bold" fill="#1a1a1a" stroke="#1a1a1a" stroke-width="0.6" textLength="127.00" lengthAdjust="spacing">WALLET FINDER</text>
<text x="285.40" y="796.95" font-size="8.21" font-weight="bold" fill="#1a1a1a" stroke="#1a1a1a" stroke-width="0.6" textLength="127.00" lengthAdjust="spacing">WALLET FINDER</text>
</g>
<text x="480.40" y="796.10" font-size="12.5" fill="#f0f0e8" font-weight="normal" stroke="#f0f0e8" stroke-width="0.4" text-anchor="start">0</text>
<g transform="translate(624.50,791.70) rotate(-57.5)"><rect x="-13.2" y="-7" width="26.4" height="14" rx="3.8" fill="#1e1e1e" stroke="#8a9a10" stroke-width="1.5"/><text x="0" y="3.3" font-size="9.2" font-weight="bold" fill="#f4f4e8" stroke="#f4f4e8" stroke-width="0.2" text-anchor="middle" textLength="19" lengthAdjust="spacingAndGlyphs">HUN</text></g>
<rect x="903.90" y="777.60" width="134.10" height="27.50" rx="3.30" fill="#1e1e1e" stroke="#8a9050" stroke-width="1.4"/>
<text x="908.30" y="796.65" font-size="14" fill="#d8d8c0" font-weight="normal" stroke="#d8d8c0" stroke-width="0.4" text-anchor="start">Michael</text>
<g transform="translate(1043.80,783.30)" fill="none" stroke="#c8dc50" stroke-width="1.5" stroke-linecap="round"><circle cx="6.8" cy="4.4" r="3.1"/><path d="M0.6,15.8 C0.6,11.8 2.8,9.5 6.8,9.5"/><ellipse cx="12.9" cy="12.6" rx="5.0" ry="2.3" transform="rotate(-45 12.9 12.6)"/></g>
<g transform="translate(1400.60,783.30)" fill="none" stroke="#c8dc50" stroke-width="1.5" stroke-linecap="round"><circle cx="6.8" cy="4.4" r="3.1"/><path d="M0.6,15.8 C0.6,11.8 2.8,9.5 6.8,9.5"/><ellipse cx="12.9" cy="12.6" rx="5.0" ry="2.3" transform="rotate(-45 12.9 12.6)"/></g>
<rect x="1083.10" y="777.40" width="311.80" height="27.90" rx="3.30" fill="#1e1e1e" stroke="#8a9050" stroke-width="1.4"/>
<text x="1087.60" y="796.90" font-size="14" fill="#8c8c7c" font-weight="normal" stroke="#8c8c7c" stroke-width="0.3" text-anchor="start">note</text>
<g fill="none" stroke="#c8dc6e" stroke-width="1.8"><circle cx="1594" cy="790.50" r="6.3"/><line x1="1598.5" y1="795.00" x2="1602.5" y2="799.00"/><path d="M1612.5,786.90 L1622.7,797.10 M1622.7,786.90 L1612.5,797.10"/></g>
<rect x="26.05" y="821.15" width="14.50" height="14.80" rx="2.95" fill="none" stroke="#d2e570" stroke-width="2.1"/>
<clipPath id="tc297"><rect x="86.75" y="823.40" width="358.35" height="16.50"/></clipPath>
<g clip-path="url(#tc297)">
<rect x="86.75" y="823.40" width="358.35" height="16.50" fill="#1e1e1e"/>
<polygon points="66.75,838.10 93.20,838.10 99.75,825.20 73.30,825.20" fill="#c5d86d"/>
<polygon points="100.10,838.10 104.70,838.10 111.25,825.20 106.65,825.20" fill="#c5d86d"/>
<polygon points="111.60,838.10 253.80,838.10 260.35,825.20 118.15,825.20" fill="#c5d86d"/>
<polygon points="260.70,838.10 265.10,838.10 271.65,825.20 267.25,825.20" fill="#c5d86d"/>
<polygon points="272.00,838.10 419.50,838.10 426.05,825.20 278.55,825.20" fill="#c5d86d"/>
<polygon points="426.40,838.10 431.20,838.10 437.75,825.20 432.95,825.20" fill="#c5d86d"/>
<polygon points="437.80,838.10 586.75,838.10 593.30,825.20 444.35,825.20" fill="#c5d86d"/>
<text x="122.20" y="835.75" font-size="8.21" font-weight="bold" fill="#1a1a1a" stroke="#1a1a1a" stroke-width="0.6" textLength="127.00" lengthAdjust="spacing">WALLET FINDER</text>
<text x="285.40" y="835.75" font-size="8.21" font-weight="bold" fill="#1a1a1a" stroke="#1a1a1a" stroke-width="0.6" textLength="127.00" lengthAdjust="spacing">WALLET FINDER</text>
</g>
<text x="480.40" y="835.00" font-size="12.5" fill="#f0f0e8" font-weight="normal" stroke="#f0f0e8" stroke-width="0.4" text-anchor="start">0</text>
<g transform="translate(624.50,830.60) rotate(-57.5)"><rect x="-13.2" y="-7" width="26.4" height="14" rx="3.8" fill="#1e1e1e" stroke="#8a9a10" stroke-width="1.5"/><text x="0" y="3.3" font-size="9.2" font-weight="bold" fill="#f4f4e8" stroke="#f4f4e8" stroke-width="0.2" text-anchor="middle" textLength="19" lengthAdjust="spacingAndGlyphs">HUN</text></g>
<g transform="translate(656.50,830.60) rotate(-57.5)"><rect x="-13.2" y="-7" width="26.4" height="14" rx="3.8" fill="#1e1e1e" stroke="#8a9a10" stroke-width="1.5"/><text x="0" y="3.3" font-size="9.2" font-weight="bold" fill="#f4f4e8" stroke="#f4f4e8" stroke-width="0.2" text-anchor="middle" textLength="19" lengthAdjust="spacingAndGlyphs">WHA</text></g>
<rect x="903.90" y="816.50" width="134.10" height="27.50" rx="3.30" fill="#1e1e1e" stroke="#8a9050" stroke-width="1.4"/>
<text x="908.30" y="835.55" font-size="14" fill="#d8d8c0" font-weight="normal" stroke="#d8d8c0" stroke-width="0.4" text-anchor="start">David</text>
<g transform="translate(1043.80,822.20)" fill="none" stroke="#c8dc50" stroke-width="1.5" stroke-linecap="round"><circle cx="6.8" cy="4.4" r="3.1"/><path d="M0.6,15.8 C0.6,11.8 2.8,9.5 6.8,9.5"/><ellipse cx="12.9" cy="12.6" rx="5.0" ry="2.3" transform="rotate(-45 12.9 12.6)"/></g>
<g transform="translate(1400.60,822.20)" fill="none" stroke="#c8dc50" stroke-width="1.5" stroke-linecap="round"><circle cx="6.8" cy="4.4" r="3.1"/><path d="M0.6,15.8 C0.6,11.8 2.8,9.5 6.8,9.5"/><ellipse cx="12.9" cy="12.6" rx="5.0" ry="2.3" transform="rotate(-45 12.9 12.6)"/></g>
<rect x="1083.10" y="816.30" width="311.80" height="27.90" rx="3.30" fill="#1e1e1e" stroke="#8a9050" stroke-width="1.4"/>
<text x="1087.60" y="835.80" font-size="14" fill="#8c8c7c" font-weight="normal" stroke="#8c8c7c" stroke-width="0.3" text-anchor="start">note</text>
<g fill="none" stroke="#c8dc6e" stroke-width="1.8"><circle cx="1594" cy="829.40" r="6.3"/><line x1="1598.5" y1="833.90" x2="1602.5" y2="837.90"/><path d="M1612.5,825.80 L1622.7,836.00 M1622.7,825.80 L1612.5,836.00"/></g>
<rect x="26.05" y="860.05" width="14.50" height="14.80" rx="2.95" fill="none" stroke="#d2e570" stroke-width="2.1"/>
<clipPath id="tc321"><rect x="86.75" y="861.80" width="358.35" height="16.50"/></clipPath>
<g clip-path="url(#tc321)">
<rect x="86.75" y="861.80" width="358.35" height="16.50" fill="#1e1e1e"/>
<polygon points="66.75,876.50 93.20,876.50 99.75,863.60 73.30,863.60" fill="#c5d86d"/>
<polygon points="100.10,876.50 104.70,876.50 111.25,863.60 106.65,863.60" fill="#c5d86d"/>
<polygon points="111.60,876.50 253.80,876.50 260.35,863.60 118.15,863.60" fill="#c5d86d"/>
<polygon points="260.70,876.50 265.10,876.50 271.65,863.60 267.25,863.60" fill="#c5d86d"/>
<polygon points="272.00,876.50 419.50,876.50 426.05,863.60 278.55,863.60" fill="#c5d86d"/>
<polygon points="426.40,876.50 431.20,876.50 437.75,863.60 432.95,863.60" fill="#c5d86d"/>
<polygon points="437.80,876.50 586.75,876.50 593.30,863.60 444.35,863.60" fill="#c5d86d"/>
<text x="122.20" y="874.15" font-size="8.21" font-weight="bold" fill="#1a1a1a" stroke="#1a1a1a" stroke-width="0.6" textLength="127.00" lengthAdjust="spacing">WALLET FINDER</text>
<text x="285.40" y="874.15" font-size="8.21" font-weight="bold" fill="#1a1a1a" stroke="#1a1a1a" stroke-width="0.6" textLength="127.00" lengthAdjust="spacing">WALLET FINDER</text>
</g>
<text x="480.40" y="873.90" font-size="12.5" fill="#f0f0e8" font-weight="normal" stroke="#f0f0e8" stroke-width="0.4" text-anchor="start">0</text>
<g transform="translate(624.50,869.50) rotate(-57.5)"><rect x="-13.2" y="-7" width="26.4" height="14" rx="3.8" fill="#1e1e1e" stroke="#8a9a10" stroke-width="1.5"/><text x="0" y="3.3" font-size="9.2" font-weight="bold" fill="#f4f4e8" stroke="#f4f4e8" stroke-width="0.2" text-anchor="middle" textLength="19" lengthAdjust="spacingAndGlyphs">HUN</text></g>
<rect x="903.90" y="855.40" width="134.10" height="27.50" rx="3.30" fill="#1e1e1e" stroke="#8a9050" stroke-width="1.4"/>
<text x="908.30" y="874.45" font-size="14" fill="#d8d8c0" font-weight="normal" stroke="#d8d8c0" stroke-width="0.4" text-anchor="start">Matthew</text>
<g transform="translate(1043.80,861.10)" fill="none" stroke="#c8dc50" stroke-width="1.5" stroke-linecap="round"><circle cx="6.8" cy="4.4" r="3.1"/><path d="M0.6,15.8 C0.6,11.8 2.8,9.5 6.8,9.5"/><ellipse cx="12.9" cy="12.6" rx="5.0" ry="2.3" transform="rotate(-45 12.9 12.6)"/></g>
<g transform="translate(1400.60,861.10)" fill="none" stroke="#c8dc50" stroke-width="1.5" stroke-linecap="round"><circle cx="6.8" cy="4.4" r="3.1"/><path d="M0.6,15.8 C0.6,11.8 2.8,9.5 6.8,9.5"/><ellipse cx="12.9" cy="12.6" rx="5.0" ry="2.3" transform="rotate(-45 12.9 12.6)"/></g>
<rect x="1083.10" y="855.20" width="311.80" height="27.90" rx="3.30" fill="#1e1e1e" stroke="#8a9050" stroke-width="1.4"/>
<text x="1087.60" y="874.70" font-size="14" fill="#8c8c7c" font-weight="normal" stroke="#8c8c7c" stroke-width="0.3" text-anchor="start">note</text>
<g fill="none" stroke="#c8dc6e" stroke-width="1.8"><circle cx="1594" cy="868.30" r="6.3"/><line x1="1598.5" y1="872.80" x2="1602.5" y2="876.80"/><path d="M1612.5,864.70 L1622.7,874.90 M1622.7,864.70 L1612.5,874.90"/></g>
<rect x="26.05" y="898.95" width="14.50" height="14.80" rx="2.95" fill="none" stroke="#d2e570" stroke-width="2.1"/>
<clipPath id="tc344"><rect x="86.75" y="900.60" width="358.35" height="16.50"/></clipPath>
<g clip-path="url(#tc344)">
<rect x="86.75" y="900.60" width="358.35" height="16.50" fill="#1e1e1e"/>
<polygon points="66.75,915.30 93.20,915.30 99.75,902.40 73.30,902.40" fill="#c5d86d"/>
<polygon points="100.10,915.30 104.70,915.30 111.25,902.40 106.65,902.40" fill="#c5d86d"/>
<polygon points="111.60,915.30 253.80,915.30 260.35,902.40 118.15,902.40" fill="#c5d86d"/>
<polygon points="260.70,915.30 265.10,915.30 271.65,902.40 267.25,902.40" fill="#c5d86d"/>
<polygon points="272.00,915.30 419.50,915.30 426.05,902.40 278.55,902.40" fill="#c5d86d"/>
<polygon points="426.40,915.30 431.20,915.30 437.75,902.40 432.95,902.40" fill="#c5d86d"/>
<polygon points="437.80,915.30 586.75,915.30 593.30,902.40 444.35,902.40" fill="#c5d86d"/>
<text x="122.20" y="912.95" font-size="8.21" font-weight="bold" fill="#1a1a1a" stroke="#1a1a1a" stroke-width="0.6" textLength="127.00" lengthAdjust="spacing">WALLET FINDER</text>
<text x="285.40" y="912.95" font-size="8.21" font-weight="bold" fill="#1a1a1a" stroke="#1a1a1a" stroke-width="0.6" textLength="127.00" lengthAdjust="spacing">WALLET FINDER</text>
</g>
<text x="480.40" y="912.80" font-size="12.5" fill="#f0f0e8" font-weight="normal" stroke="#f0f0e8" stroke-width="0.4" text-anchor="start">0</text>
<g transform="translate(624.50,908.40) rotate(-57.5)"><rect x="-13.2" y="-7" width="26.4" height="14" rx="3.8" fill="#1e1e1e" stroke="#8a9a10" stroke-width="1.5"/><text x="0" y="3.3" font-size="9.2" font-weight="bold" fill="#f4f4e8" stroke="#f4f4e8" stroke-width="0.2" text-anchor="middle" textLength="19" lengthAdjust="spacingAndGlyphs">HUN</text></g>
<g transform="translate(656.50,908.40) rotate(-57.5)"><rect x="-13.2" y="-7" width="26.4" height="14" rx="3.8" fill="#1e1e1e" stroke="#8a9a10" stroke-width="1.5"/><text x="0" y="3.3" font-size="9.2" font-weight="bold" fill="#f4f4e8" stroke="#f4f4e8" stroke-width="0.2" text-anchor="middle" textLength="19" lengthAdjust="spacingAndGlyphs">WHA</text></g>
<g transform="translate(688.50,908.40) rotate(-57.5)"><rect x="-13.2" y="-7" width="26.4" height="14" rx="3.8" fill="#1e1e1e" stroke="#8a9a10" stroke-width="1.5"/><text x="0" y="3.3" font-size="9.2" font-weight="bold" fill="#f4f4e8" stroke="#f4f4e8" stroke-width="0.2" text-anchor="middle" textLength="19" lengthAdjust="spacingAndGlyphs">SMA</text></g>
<rect x="903.90" y="894.30" width="134.10" height="27.50" rx="3.30" fill="#1e1e1e" stroke="#8a9050" stroke-width="1.4"/>
<text x="908.30" y="913.35" font-size="14" fill="#d8d8c0" font-weight="normal" stroke="#d8d8c0" stroke-width="0.4" text-anchor="start">Christopher</text>
<g transform="translate(1043.80,900.00)" fill="none" stroke="#c8dc50" stroke-width="1.5" stroke-linecap="round"><circle cx="6.8" cy="4.4" r="3.1"/><path d="M0.6,15.8 C0.6,11.8 2.8,9.5 6.8,9.5"/><ellipse cx="12.9" cy="12.6" rx="5.0" ry="2.3" transform="rotate(-45 12.9 12.6)"/></g>
<g transform="translate(1400.60,900.00)" fill="none" stroke="#c8dc50" stroke-width="1.5" stroke-linecap="round"><circle cx="6.8" cy="4.4" r="3.1"/><path d="M0.6,15.8 C0.6,11.8 2.8,9.5 6.8,9.5"/><ellipse cx="12.9" cy="12.6" rx="5.0" ry="2.3" transform="rotate(-45 12.9 12.6)"/></g>
<rect x="1083.10" y="894.10" width="311.80" height="27.90" rx="3.30" fill="#1e1e1e" stroke="#8a9050" stroke-width="1.4"/>
<text x="1087.60" y="913.60" font-size="14" fill="#8c8c7c" font-weight="normal" stroke="#8c8c7c" stroke-width="0.3" text-anchor="start">note</text>
<g fill="none" stroke="#c8dc6e" stroke-width="1.8"><circle cx="1594" cy="907.20" r="6.3"/><line x1="1598.5" y1="911.70" x2="1602.5" y2="915.70"/><path d="M1612.5,903.60 L1622.7,913.80 M1622.7,903.60 L1612.5,913.80"/></g>
<rect x="26.05" y="937.85" width="14.50" height="14.80" rx="2.95" fill="none" stroke="#d2e570" stroke-width="2.1"/>
<text x="480.40" y="951.70" font-size="12.5" fill="#f0f0e8" font-weight="normal" stroke="#f0f0e8" stroke-width="0.4" text-anchor="start">0</text>
<g transform="translate(624.50,947.30) rotate(-57.5)"><rect x="-13.2" y="-7" width="26.4" height="14" rx="3.8" fill="#1e1e1e" stroke="#8a9a10" stroke-width="1.5"/><text x="0" y="3.3" font-size="9.2" font-weight="bold" fill="#f4f4e8" stroke="#f4f4e8" stroke-width="0.2" text-anchor="middle" textLength="19" lengthAdjust="spacingAndGlyphs">HUN</text></g>
<rect x="903.90" y="933.20" width="134.10" height="27.50" rx="3.30" fill="#1e1e1e" stroke="#8a9050" stroke-width="1.4"/>
<text x="908.30" y="952.25" font-size="14" fill="#d8d8c0" font-weight="normal" stroke="#d8d8c0" stroke-width="0.4" text-anchor="start">Ryan</text>
<g transform="translate(1043.80,938.90)" fill="none" stroke="#c8dc50" stroke-width="1.5" stroke-linecap="round"><circle cx="6.8" cy="4.4" r="3.1"/><path d="M0.6,15.8 C0.6,11.8 2.8,9.5 6.8,9.5"/><ellipse cx="12.9" cy="12.6" rx="5.0" ry="2.3" transform="rotate(-45 12.9 12.6)"/></g>
<g transform="translate(1400.60,938.90)" fill="none" stroke="#c8dc50" stroke-width="1.5" stroke-linecap="round"><circle cx="6.8" cy="4.4" r="3.1"/><path d="M0.6,15.8 C0.6,11.8 2.8,9.5 6.8,9.5"/><ellipse cx="12.9" cy="12.6" rx="5.0" ry="2.3" transform="rotate(-45 12.9 12.6)"/></g>
<rect x="1083.10" y="933.00" width="311.80" height="27.90" rx="3.30" fill="#1e1e1e" stroke="#8a9050" stroke-width="1.4"/>
<text x="1087.60" y="952.50" font-size="14" fill="#8c8c7c" font-weight="normal" stroke="#8c8c7c" stroke-width="0.3" text-anchor="start">note</text>
<g fill="none" stroke="#c8dc6e" stroke-width="1.8"><circle cx="1594" cy="946.10" r="6.3"/><line x1="1598.5" y1="950.60" x2="1602.5" y2="954.60"/><path d="M1612.5,942.50 L1622.7,952.70 M1622.7,942.50 L1612.5,952.70"/></g>
</g>
<clipPath id="tc379"><rect x="86.75" y="937.90" width="358.35" height="16.50"/></clipPath>
<g clip-path="url(#tc379)">
<rect x="86.75" y="937.90" width="358.35" height="16.50" fill="#1e1e1e"/>
<polygon points="66.75,952.60 93.20,952.60 99.75,939.70 73.30,939.70" fill="#c5d86d"/>
<polygon points="100.10,952.60 104.70,952.60 111.25,939.70 106.65,939.70" fill="#c5d86d"/>
<polygon points="111.60,952.60 253.80,952.60 260.35,939.70 118.15,939.70" fill="#c5d86d"/>
<polygon points="260.70,952.60 265.10,952.60 271.65,939.70 267.25,939.70" fill="#c5d86d"/>
<polygon points="272.00,952.60 419.50,952.60 426.05,939.70 278.55,939.70" fill="#c5d86d"/>
<polygon points="426.40,952.60 431.20,952.60 437.75,939.70 432.95,939.70" fill="#c5d86d"/>
<polygon points="437.80,952.60 586.75,952.60 593.30,939.70 444.35,939.70" fill="#c5d86d"/>
<text x="122.20" y="950.25" font-size="8.21" font-weight="bold" fill="#1a1a1a" stroke="#1a1a1a" stroke-width="0.6" textLength="127.00" lengthAdjust="spacing">WALLET FINDER</text>
<text x="285.40" y="950.25" font-size="8.21" font-weight="bold" fill="#1a1a1a" stroke="#1a1a1a" stroke-width="0.6" textLength="127.00" lengthAdjust="spacing">WALLET FINDER</text>
</g>
</svg>
</body></html>
